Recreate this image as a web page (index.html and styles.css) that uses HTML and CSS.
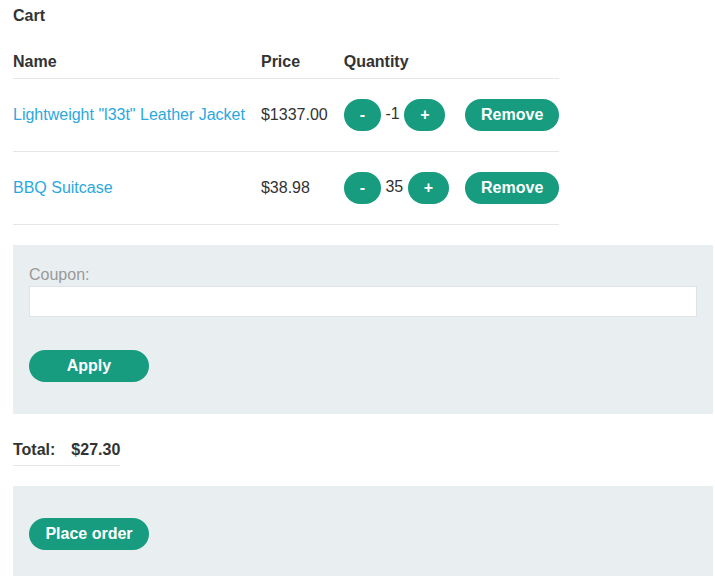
FILE: index.html
```html
<!DOCTYPE html>
<html>
<head>
<meta charset="utf-8">
<link rel="stylesheet" href="styles.css">
</head>
<body>
<div class="page">
  <h1 class="title">Cart</h1>
  <table class="cart">
    <thead>
      <tr><th>Name</th><th>Price</th><th>Quantity</th><th></th></tr>
    </thead>
    <tbody>
      <tr>
        <td><a class="link" href="#">Lightweight "l33t" Leather Jacket</a></td>
        <td>$1337.00</td>
        <td class="qty"><button class="btn">-</button> -1 <button class="btn">+</button></td>
        <td class="last"><button class="btn">Remove</button></td>
      </tr>
      <tr>
        <td><a class="link" href="#">BBQ Suitcase</a></td>
        <td>$38.98</td>
        <td class="qty"><button class="btn">-</button> 35 <button class="btn">+</button></td>
        <td class="last"><button class="btn">Remove</button></td>
      </tr>
    </tbody>
  </table>

  <div class="panel coupon">
    <label class="label">Coupon:</label>
    <input class="input" type="text">
    <button class="btn wide apply">Apply</button>
  </div>

  <table class="total">
    <tr><th>Total:</th><th class="last">$27.30</th></tr>
  </table>

  <div class="panel order">
    <button class="btn wide">Place order</button>
  </div>
</div>
</body>
</html>
```
FILE: styles.css
```css
html, body {
  margin: 0;
  padding: 0;
  background: #fff;
}
body {
  font-family: "Liberation Sans", Arial, sans-serif;
  font-size: 16px;
  color: #333;
}
.page {
  width: 700px;
  padding: 7px 0 0 13px;
}
.title {
  font-size: 16px;
  font-weight: bold;
  margin: 0;
  line-height: 18px;
}
.cart {
  border-collapse: collapse;
  margin-top: 20px;
}
.cart th {
  text-align: left;
  font-weight: bold;
  padding: 8px 16px 7px 0;
  line-height: 18px;
  border-bottom: 1px solid #e6e6e6;
}
.cart td {
  padding: 20px 16px 20px 0;
  line-height: 18px;
  border-bottom: 1px solid #e6e6e6;
  white-space: nowrap;
}
.cart .last {
  padding-right: 0;
}
.link {
  color: #2aa8e0;
  text-decoration: none;
}
.btn {
  font-family: "Liberation Sans", Arial, sans-serif;
  font-size: 16px;
  font-weight: bold;
  color: #fff;
  background: #179c7f;
  border: none;
  border-radius: 16px;
  height: 32px;
  padding: 0 16px;
  line-height: 32px;
  vertical-align: middle;
  cursor: pointer;
}
.wide {
  min-width: 120px;
}
.panel {
  background: #e9eef1;
  margin-top: 20px;
}
.coupon {
  padding: 21px 16px 32px;
}
.label {
  display: block;
  color: #999;
  line-height: 18px;
  margin-bottom: 2px;
}
.input {
  display: block;
  box-sizing: border-box;
  width: 100%;
  height: 31px;
  border: 1px solid #dfe3e6;
  background: #fff;
  margin: 0;
}
.apply {
  display: block;
  margin-top: 33px;
}
.total {
  border-collapse: collapse;
  margin-top: 20px;
}
.total th {
  text-align: left;
  font-weight: bold;
  padding: 7px 16px 6px 0;
  line-height: 18px;
  border-bottom: 1px solid #e6e6e6;
}
.total .last {
  padding-right: 0;
}
.order {
  padding: 32px 16px 32px;
}
.order .btn {
  display: block;
}
```
